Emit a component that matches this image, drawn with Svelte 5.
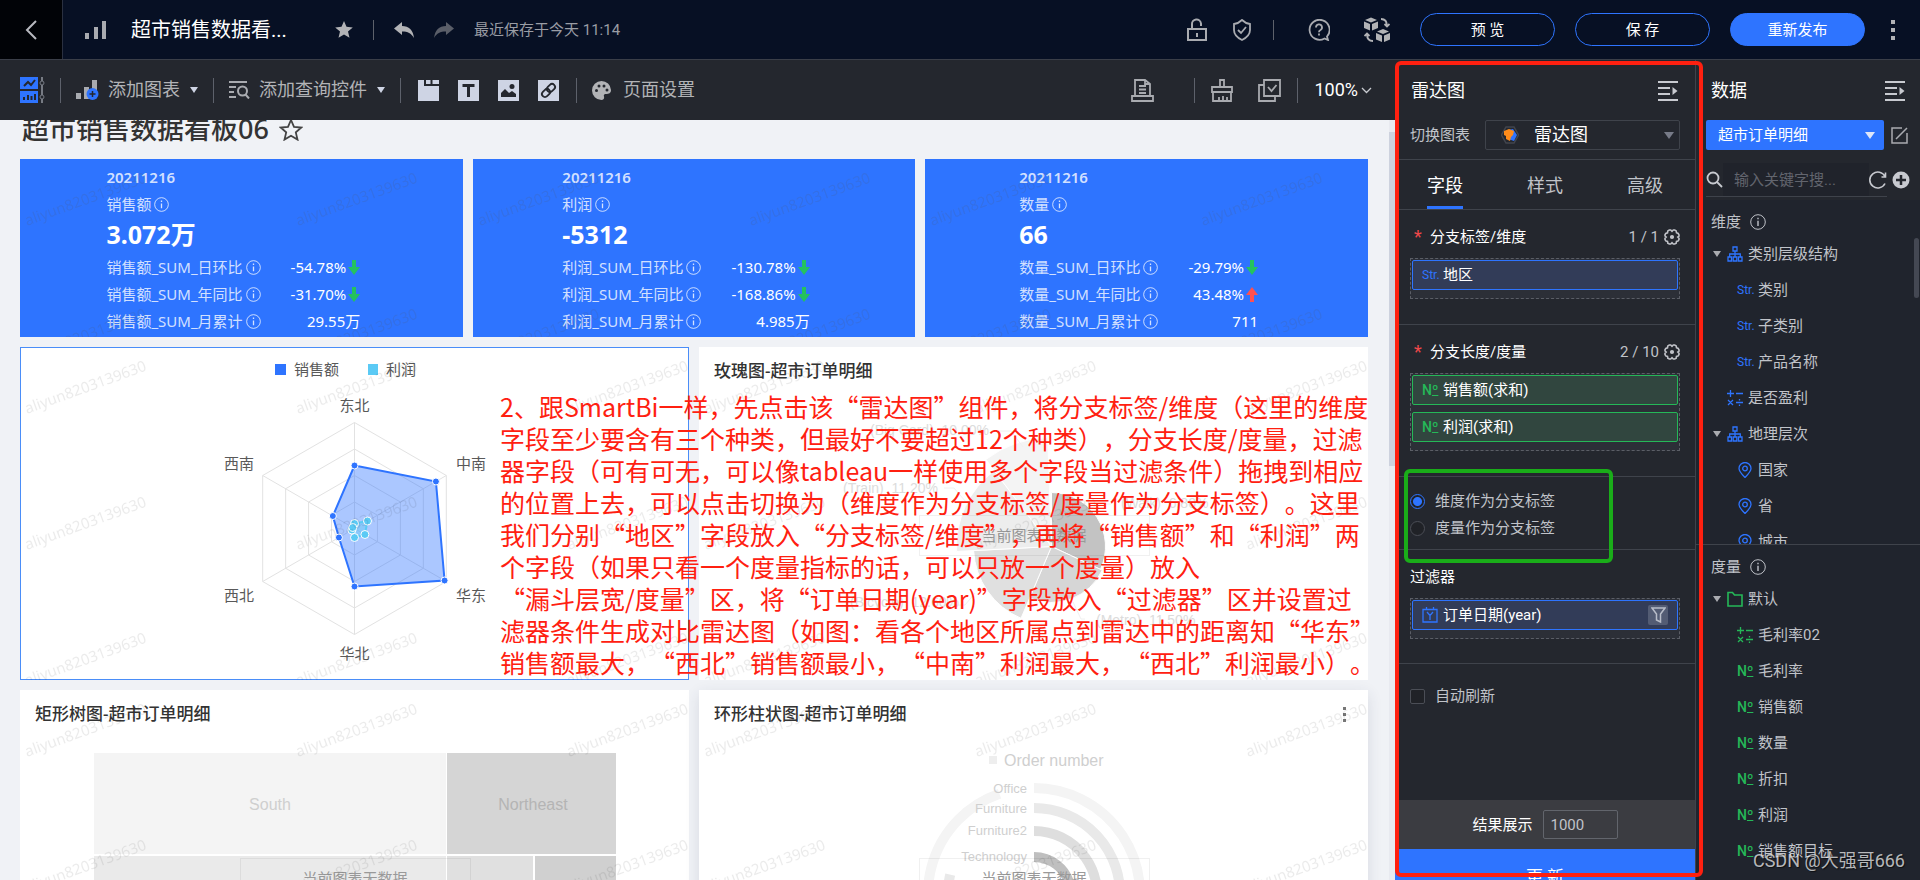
<script>
    let tab = $state("字段");
    let splitBy = $state("dim");
    let autoRefresh = $state(false);
    let limit = $state("1000");
    let keyword = $state("");

    const tabs = ["字段", "样式", "高级"];

    const kpis = [
        {
            name: "销售额", value: "3.072万",
            rows: [
                { label: "销售额_SUM_日环比", value: "-54.78%", trend: "down" },
                { label: "销售额_SUM_年同比", value: "-31.70%", trend: "down" },
                { label: "销售额_SUM_月累计", value: "29.55万" }
            ]
        },
        {
            name: "利润", value: "-5312",
            rows: [
                { label: "利润_SUM_日环比", value: "-130.78%", trend: "down" },
                { label: "利润_SUM_年同比", value: "-168.86%", trend: "down" },
                { label: "利润_SUM_月累计", value: "4.985万" }
            ]
        },
        {
            name: "数量", value: "66",
            rows: [
                { label: "数量_SUM_日环比", value: "-29.79%", trend: "down" },
                { label: "数量_SUM_年同比", value: "43.48%", trend: "up" },
                { label: "数量_SUM_月累计", value: "711" }
            ]
        }
    ];

    const dimensions = [
        { icon: "tree", text: "类别层级结构", open: true },
        { icon: "str", text: "类别", sub: true },
        { icon: "str", text: "子类别", sub: true },
        { icon: "str", text: "产品名称", sub: true },
        { icon: "calc", text: "是否盈利" },
        { icon: "tree", text: "地理层次", open: true },
        { icon: "pin", text: "国家", sub: true },
        { icon: "pin", text: "省", sub: true },
        { icon: "pin", text: "城市", sub: true }
    ];

    const measures = [
        { icon: "folder", text: "默认", open: true },
        { icon: "calc", text: "毛利率02", sub: true },
        { icon: "no", text: "毛利率", sub: true },
        { icon: "no", text: "销售额", sub: true },
        { icon: "no", text: "数量", sub: true },
        { icon: "no", text: "折扣", sub: true },
        { icon: "no", text: "利润", sub: true },
        { icon: "no", text: "销售额目标", sub: true }
    ];

    const noteLines = [
        "2、跟SmartBi一样，先点击该“雷达图”组件，将分支标签/维度（这里的维度",
        "字段至少要含有三个种类，但最好不要超过12个种类），分支长度/度量，过滤",
        "器字段（可有可无，可以像tableau一样使用多个字段当过滤条件）拖拽到相应",
        "的位置上去，可以点击切换为（维度作为分支标签/度量作为分支标签）。这里",
        "我们分别“地区”字段放入“分支标签/维度”，再将“销售额”和“利润”两",
        "个字段（如果只看一个度量指标的话，可以只放一个度量）放入",
        "“漏斗层宽/度量”区，将“订单日期(year)”字段放入“过滤器”区并设置过",
        "滤器条件生成对比雷达图（如图：看各个地区所属点到雷达中的距离知“华东”",
        "销售额最大，“西北”销售额最小，“中南”利润最大，“西北”利润最小）。"
    ];

    // angle is in degrees, clockwise from the top
    function polar(cx, cy, r, angle) {
        const a = (angle - 90) * Math.PI / 180;
        return [cx + r * Math.cos(a), cy + r * Math.sin(a)];
    }

    const radar = { cx: 334.5, cy: 181.5, r: 106 };
    const axes = [0, 60, 120, 180, 240, 300];
    const ring = (r) => axes.map((a) => polar(radar.cx, radar.cy, r, a).join(",")).join(" ");
    const points = (values) => values.map((v, i) => polar(radar.cx, radar.cy, v, axes[i]));
    const sales = points([63, 94, 104, 58, 18, 25]);
    const profit = points([5, 15, 12, 9, 3, 2]);

    const radarLabels = [
        { text: "东北", x: 334.5, y: 64, anchor: "middle" },
        { text: "中南", x: 436, y: 122, anchor: "start" },
        { text: "华东", x: 436, y: 254, anchor: "start" },
        { text: "华北", x: 334.5, y: 312, anchor: "middle" },
        { text: "西北", x: 234, y: 254, anchor: "end" },
        { text: "西南", x: 234, y: 122, anchor: "end" }
    ];

    function sector(cx, cy, r, from, to) {
        const [x0, y0] = polar(cx, cy, r, from);
        const [x1, y1] = polar(cx, cy, r, to);
        return `M${cx} ${cy}L${x0} ${y0}A${r} ${r} 0 0 1 ${x1} ${y1}Z`;
    }

    const rose = [
        { r: 54, from: 0, to: 115, fill: "#c3c3c3" },
        { r: 56, from: 115, to: 203, fill: "#d6d6d6" },
        { r: 78, from: 203, to: 267, fill: "#e0e0e0" },
        { r: 95, from: 267, to: 323, fill: "#ededed" },
        { r: 109, from: 323, to: 358, fill: "#f4f4f4" }
    ];

    const roseLabels = [
        { text: "(Big Card)  10.00%", x: 171, y: 88 },
        { text: "(Train)  11.20%", x: 144, y: 146 },
        { text: "(Bicycle)  12.60%", x: 151, y: 260 },
        { text: "(Walk)  6.80%", x: 422, y: 161 },
        { text: "(Metro)  11.50%", x: 397, y: 278 }
    ];

    function arc(r, to) {
        const [x, y] = polar(335, 204, r, to);
        return `M335 ${204 - r}A${r} ${r} 0 ${to > 180 ? 1 : 0} 1 ${x} ${y}`;
    }

    const rings = [
        { text: "Office", r: 106, to: 341, stroke: "#f4f4f4", y: 103 },
        { text: "Furniture", r: 86, to: 283, stroke: "#e9e9e9", y: 123 },
        { text: "Furniture2", r: 63, to: 220, stroke: "#dedede", y: 145 },
        { text: "Technology", r: 37, to: 150, stroke: "#bfbfbf", y: 171 }
    ];
</script>

{#snippet watermark(id, dark)}
    <svg class="watermark" class:dark aria-hidden="true">
        <defs>
            <pattern {id} width="271" height="136" patternUnits="userSpaceOnUse">
                <text transform="translate(7 67) rotate(-20)">aliyun8203139630</text>
            </pattern>
        </defs>
        <rect width="100%" height="100%" fill="url(#{id})" />
    </svg>
{/snippet}

{#snippet info(size)}
    <svg width={size} height={size} viewBox="0 0 16 16" fill="none" stroke="currentColor">
        <circle cx="8" cy="8" r="7.3" />
        <path d="M8 6.800v5.200M8 3.800v1.500" stroke-width="1.400" />
    </svg>
{/snippet}

{#snippet collapse()}
    <svg width="20" height="20" viewBox="0 0 20 20" stroke="#c8cad0" stroke-width="2" fill="none">
        <path d="M0 1h20M0 7h12M0 13h12M0 19h20" />
        <path d="M14.5 6v8l5-4z" fill="#c8cad0" stroke="none" />
    </svg>
{/snippet}

{#snippet gear()}
    <svg width="16" height="16" viewBox="0 0 16 16" fill="none" stroke="#c0c2c8" stroke-width="1.600">
        <path d="M5.300 1h1.400l1.300 1.300L9.300 1h1.400l1.500.900.300 1.900 1.700.700.800 1.400v1.200L13.800 8l1.200 1.300v1.200l-.800 1.400-1.700.500-.300 1.800-1.500.800H9.300L8 13.700 6.700 15H5.300l-1.500-.800-.300-1.800-1.700-.500L1 10.500V9.300L2.200 8 1 7V5.800l.800-1.400 1.700-.600.300-1.900z" />
        <circle cx="8" cy="8" r="1.300" fill="#c0c2c8" />
    </svg>
{/snippet}

{#snippet fieldIcon(kind)}
    {#if kind === "str"}
        <span class="ft str">Str.</span>
    {:else if kind === "no"}
        <span class="ft no">N<u>º</u></span>
    {:else}
        <svg class="ft" width="16" height="16" viewBox="0 0 16 16" fill="none" stroke="currentColor" stroke-width="1.300">
            {#if kind === "tree"}
                <path d="M6 1h4v4H6zM1 11h3.500v4H1zM6.200 11h3.600v4H6.200zM11.500 11H15v4h-3.500zM8 5v6M2.700 11V8h10.600v3" />
            {:else if kind === "calc"}
                <path d="M0 3.500h7M3.500 0v7M9 3.500h7M1 10l5 5M6 10l-5 5M9 12.500h7M12.500 9v1.500M12.500 14.500V16" />
            {:else if kind === "pin"}
                <path d="M8 15.500C4.500 12 2 9.500 2 6.500a6 6 0 0 1 12 0c0 3-2.500 5.500-6 9z" />
                <circle cx="8" cy="6.500" r="2.300" />
            {:else if kind === "folder"}
                <path d="M1 1.500h4.500l2 2.500H15v11H1z" stroke-width="1.600" />
            {:else if kind === "date"}
                <path d="M1 2.500h14v12.500H1zM4.500 0v3M11.500 0v3M5 5l3 3.500L11 5M8 8.500V13" />
            {/if}
        </svg>
    {/if}
{/snippet}

{#snippet tree(items)}
    <ul>
        {#each items as item}
            <li class:sub={item.sub}>
                <span class="arrow">{#if item.open}<i class="caret"></i>{/if}</span>
                {@render fieldIcon(item.icon)}
                <span>{item.text}</span>
            </li>
        {/each}
    </ul>
{/snippet}

<div class="app">
    <header>
        <button class="back" aria-label="返回">
            <svg width="12" height="20" viewBox="0 0 12 20" fill="none" stroke="#b8bac0" stroke-width="2"><path d="M11 1L2 10l9 9" /></svg>
        </button>
        <svg class="bars" width="22" height="18" viewBox="0 0 22 18" fill="#a9abb0">
            <path d="M0 12h4v6H0zM9 6h4v12H9z" /><path d="M17 0h4v18h-4z" />
        </svg>
        <span class="doc">超市销售数据看...</span>
        <svg class="fav" width="18" height="17" viewBox="0 0 18 17" fill="#b2b3b6"><path d="M9 0l2.500 5.800 6.300.600-4.800 4.200 1.500 6.200L9 13.500l-5.500 3.300L5 10.600.200 6.400l6.300-.600z" /></svg>
        <i class="bar"></i>
        <svg class="undo" width="20" height="16" viewBox="0 0 20 16" fill="#b2b3b6"><path d="M8 0v4c7 0 11 4 12 12-3-5-6-6.500-12-6.500V13L0 6.500z" /></svg>
        <svg class="redo" width="20" height="16" viewBox="0 0 20 16" fill="#5a5e68"><path d="M12 0v4C5 4 1 8 0 16c3-5 6-6.500 12-6.500V13l8-6.500z" /></svg>
        <span class="saved">最近保存于今天 11:14</span>
        <div class="actions">
            <svg width="20" height="24" viewBox="0 0 20 24" fill="none" stroke="#a9abb0" stroke-width="2"><path d="M1 11h18v11H1zM5 11V6.500a4.500 4.500 0 0 1 9-1V8M10 15v4" /></svg>
            <svg width="18" height="22" viewBox="0 0 18 22" fill="none" stroke="#a9abb0" stroke-width="1.800"><path d="M9 1c2.500 2.500 4.500 3.500 8 4v6c0 5-4 8-8 10-4-2-8-5-8-10V5c3.500-.500 5.500-1.500 8-4z" /><path d="M5 11l3 3 5-6" /></svg>
            <i class="bar"></i>
            <svg class="help" width="22" height="22" viewBox="0 0 22 22" fill="none" stroke="#a9abb0" stroke-width="1.800"><path d="M19 17.500A10 10 0 1 0 16.500 19.500L20 21z" /><path d="M8 8.500a3 3 0 1 1 4.200 2.700c-.900.400-1.200.900-1.200 2M11 14.500v2" /></svg>
            <svg width="26" height="26" viewBox="0 0 26 26" fill="#b2b3b6"><path d="M1 3l6-2.500L13 3 7 5.500zM0 4.500l6 2.500v6.500L0 11zM14 4.500L8 7v6.500l6-2.500zM13 14.500l6-2.500 6 2.500-6 2.500zM12 16l6 2.500V25l-6-2.500zM26 16l-6 2.500V25l6-2.500z" /><path d="M17 2c4 0 6 2 6 7M20.500 7l2.500 2.500L25.500 7M9 24c-4 0-6-2-6-7M.500 19L3 16.500 5.500 19" fill="none" stroke="#b2b3b6" stroke-width="1.800" /></svg>
            <div class="btns">
                <button class="pill">预 览</button>
                <button class="pill">保 存</button>
                <button class="pill solid">重新发布</button>
            </div>
            <svg width="5" height="20" viewBox="0 0 5 20" fill="#b2b3b6"><path d="M0 0h4v4H0zM0 8h4v4H0zM0 16h4v4H0z" /></svg>
        </div>
    </header>

    <main>
        <div class="toolbar">
            <svg width="25" height="26" viewBox="0 0 25 26"><path d="M0 0h18v12H0zM0 14h18v12H0z" fill="#2e74ff" /><path d="M4 9l4-4 3 3 4-5M4 23v-3M8 23v-5M11.500 23v-4M15 23v-6" fill="none" stroke="#24272e" stroke-width="2" /><path d="M22 0v4M22 8v10M22 22v4" stroke="#777b84" stroke-width="2" /><circle cx="22" cy="6" r="2" fill="none" stroke="#777b84" /><circle cx="22" cy="20" r="2" fill="none" stroke="#777b84" /></svg>
            <i class="bar"></i>
            <button class="tool">
                <svg width="23" height="20" viewBox="0 0 23 20" fill="#a9abb0"><path d="M0 13h5v6H0zM8 7h5v12H8zM16 0h5v13h-5z" /><circle cx="16.500" cy="14" r="6" fill="#2e74ff" /><path d="M13.500 14h6M16.500 11v6" stroke="#24272e" stroke-width="1.500" /></svg>
                添加图表 <i class="caret light"></i>
            </button>
            <i class="bar"></i>
            <button class="tool">
                <svg width="21" height="18" viewBox="0 0 21 18" fill="none" stroke="#a9abb0" stroke-width="2"><path d="M0 1h18M0 6h7M0 11h5M0 16h7M16.500 13.500l3.500 4" /><circle cx="13.500" cy="10" r="4.500" /></svg>
                添加查询控件 <i class="caret light"></i>
            </button>
            <i class="bar"></i>
            <div class="blocks">
                <button aria-label="选项卡"><svg width="21" height="21" viewBox="0 0 21 21"><path d="M0 0h21v21H0z" fill="#ced4e4" /><path d="M7 0v5h14M13.500 0v5" fill="none" stroke="#24272e" stroke-width="2" /></svg></button>
                <button aria-label="文本"><svg width="21" height="21" viewBox="0 0 21 21"><path d="M0 0h21v21H0z" fill="#ced4e4" /><path d="M4.500 5.500h12M10.500 5v12" fill="none" stroke="#24272e" stroke-width="3" /></svg></button>
                <button aria-label="图片"><svg width="21" height="21" viewBox="0 0 21 21"><path d="M0 0h21v21H0z" fill="#ced4e4" /><path d="M3 17v-4l4-4 4 4 3-2 4 3v3z" fill="#24272e" /><circle cx="14" cy="6.500" r="2.500" fill="#24272e" /></svg></button>
                <button aria-label="链接"><svg width="21" height="21" viewBox="0 0 21 21"><path d="M0 0h21v21H0z" fill="#ced4e4" /><g fill="none" stroke="#24272e" stroke-width="1.800" transform="rotate(-45 10.500 10.500)"><rect x="2.500" y="7.500" width="9" height="6" rx="3" /><rect x="9.500" y="7.500" width="9" height="6" rx="3" /></g></svg></button>
            </div>
            <i class="bar"></i>
            <button class="tool page">
                <svg width="19" height="19" viewBox="0 0 19 19"><path d="M9.500 0a9.500 9.500 0 0 1 9.500 9c0 3-2 4-5 4-2 0-2.500 1-2 2.500.500 2-.500 3.500-2.500 3.500a9.500 9.500 0 0 1 0-19z" fill="#b2b3b6" /><g fill="#24272e"><circle cx="4.500" cy="9.500" r="1.500" /><circle cx="7" cy="5" r="1.500" /><circle cx="12" cy="5" r="1.500" /><circle cx="15" cy="9" r="1.500" /></g></svg>
                页面设置
            </button>
            <div class="right">
                <svg class="print" width="23" height="23" viewBox="0 0 23 23" fill="none" stroke="#a9abb0" stroke-width="1.800"><path d="M4 17V1h10l5 4v12M1 17h21v5H1zM8 7h7M8 10.500h7M8 14h7M14 1v4h5" /></svg>
                <i class="bar"></i>
                <svg width="22" height="23" viewBox="0 0 22 23" fill="none" stroke="#a9abb0" stroke-width="1.800"><path d="M9 8V1h4v7M1 8h20v5H1zM2 13v9h18v-9M8 22v-4M12 22v-5M16 22v-4" /></svg>
                <svg width="23" height="23" viewBox="0 0 23 23" fill="none" stroke="#a9abb0" stroke-width="1.800"><path d="M6 1h16v16H6zM6 6H1v16h16v-5M10 8l3.500 4 5-6" /></svg>
                <i class="bar"></i>
                <button class="zoom">100%<svg width="11" height="7" viewBox="0 0 11 7" fill="none" stroke="#c8cad0" stroke-width="1.300"><path d="M1 1l4.500 4.500L10 1" /></svg></button>
            </div>
        </div>

        <div class="canvas">
            <h1>超市销售数据看板06
                <svg width="24" height="23" viewBox="0 0 24 23" fill="none" stroke="#444" stroke-width="1.800"><path d="M12 2l3 6.800 7.300.700-5.500 4.900 1.700 7.200L12 17.800l-6.500 3.800 1.700-7.200L1.700 9.500 9 8.800z" /></svg>
            </h1>
            <div class="row three">
                {#each kpis as kpi, i}
                    <section class="kpi">
                        <div class="kpi-body">
                            <div class="date">20211216</div>
                            <div class="name">{kpi.name}{@render info(15)}</div>
                            <div class="value">{kpi.value}</div>
                            <div class="rows">
                                {#each kpi.rows as row}
                                    <div class="name">{row.label}{@render info(15)}</div>
                                    <div class="num">{row.value}{#if row.trend}<svg class={row.trend} width="12" height="15" viewBox="0 0 12 15"><path d="M4 0h4v7h4l-6 8-6-8h4z" /></svg>{/if}</div>
                                {/each}
                            </div>
                        </div>
                        {@render watermark("wm-kpi" + i, true)}
                    </section>
                {/each}
            </div>

            <div class="row two">
                <section class="card selected">
                    <svg class="chart over" viewBox="0 0 669 333">
                        <rect x="255" y="17" width="11" height="11" fill="#2e74ff" />
                        <text x="274" y="28" class="label">销售额</text>
                        <rect x="348" y="17" width="10" height="11" fill="#5bcaf5" />
                        <text x="366" y="28" class="label">利润</text>
                        <g fill="none" stroke="#e2e2e2">
                            {#each [26.5, 53, 79.5, 106] as r}
                                <polygon points={ring(r)} />
                            {/each}
                            {#each points([106, 106, 106, 106, 106, 106]) as p}
                                <line x1={radar.cx} y1={radar.cy} x2={p[0]} y2={p[1]} />
                            {/each}
                        </g>
                        <polygon points={sales.join(" ")} fill="#2e74ff" fill-opacity=".4" stroke="#2e74ff" stroke-width="2" />
                        <polygon points={profit.join(" ")} fill="#5bcaf5" fill-opacity=".4" stroke="#5bcaf5" stroke-width="2" />
                        {#each sales as p}
                            <circle cx={p[0]} cy={p[1]} r="3.500" fill="#2e74ff" stroke="#fff" />
                        {/each}
                        {#each profit as p}
                            <circle cx={p[0]} cy={p[1]} r="4" fill="#5bcaf5" stroke="#fff" />
                        {/each}
                        {#each radarLabels as l}
                            <text x={l.x} y={l.y} text-anchor={l.anchor} class="label">{l.text}</text>
                        {/each}
                    </svg>
                    {@render watermark("wm-radar")}
                </section>

                <section class="card">
                    <h2>玫瑰图-超市订单明细</h2>
                    <svg class="chart over" viewBox="0 0 669 333">
                        {#each rose as s}
                            <path d={sector(352.5, 199.5, s.r, s.from, s.to)} fill={s.fill} stroke="#fff" />
                        {/each}
                        <path d="M292 84h20l12 16M245 141h10l12 14M246 258h20l10-12M412 157h-10l-8 10M386 272h-4l-8-17" fill="none" stroke="#f0f0f0" />
                        {#each roseLabels as l}
                            <text x={l.x} y={l.y} class="ghost s14">{l.text}</text>
                        {/each}
                    </svg>
                    <div class="empty">当前图表无数据</div>
                    {@render watermark("wm-rose")}
                </section>
            </div>

            <div class="row two">
                <section class="card">
                    <h2>矩形树图-超市订单明细</h2>
                    <svg class="chart over" viewBox="0 0 669 333">
                        <path d="M74 63h352v101H74z" fill="#f4f4f4" />
                        <path d="M427 63h169v101H427z" fill="#d5d5d5" />
                        <path d="M74 166h352v120H74z" fill="#eaeaea" />
                        <path d="M427 166h86v120h-86z" fill="#e0e0e0" />
                        <path d="M515 166h81v120h-81z" fill="#d0d0d0" />
                        <text x="250" y="120" text-anchor="middle" class="ghost s16">South</text>
                        <text x="513" y="120" text-anchor="middle" class="ghost s16 deep">Northeast</text>
                    </svg>
                    <div class="empty">当前图表无数据</div>
                    {@render watermark("wm-tree")}
                </section>

                <section class="card raised">
                    <h2>环形柱状图-超市订单明细</h2>
                    <svg class="more" width="3" height="15" viewBox="0 0 3 15" fill="#777"><path d="M0 0h3v3H0zM0 6h3v3H0zM0 12h3v3H0z" /></svg>
                    <svg class="chart over" viewBox="0 0 669 333">
                        <rect x="290" y="66" width="8" height="8" fill="#eee" />
                        <text x="305" y="76" class="ghost s16">Order number</text>
                        {#each rings as r}
                            <path d={arc(r.r, r.to)} fill="none" stroke={r.stroke} stroke-width="10" />
                            <text x="328" y={r.y} text-anchor="end" class="ghost s13">{r.text}</text>
                        {/each}
                    </svg>
                    <div class="empty">当前图表无数据</div>
                    {@render watermark("wm-ring")}
                </section>
            </div>
            <div class="scroll"></div>
            <div class="note">
                {#each noteLines as line}
                    <div>{line}</div>
                {/each}
            </div>
        </div>
    </main>

    <aside class="config">
        <div class="head">雷达图 {@render collapse()}</div>
        <div class="switch">
            <label for="chart">切换图表</label>
            <div class="pick">
                <select id="chart"><option>雷达图</option></select>
                <svg class="hex" width="18" height="18" viewBox="0 0 18 18"><path d="M5 1h8l4.500 8-4.500 8H5L.500 9z" fill="none" stroke="#42454d" stroke-width="1.500" /><path d="M7 4l5-1 4 6-3 6-6-2z" fill="#2e74ff" /><path d="M3 5l5-2 5 2-1 4-2 2-1 4-4-2 0-3-2-1z" fill="#ff8c1a" /></svg>
                <i class="caret big"></i>
            </div>
        </div>
        <nav>
            {#each tabs as t}
                <button class:active={t === tab} onclick={() => (tab = t)}>{t}</button>
            {/each}
        </nav>
        <div class="section">
            <div class="title"><b>*</b>分支标签/维度<span>1 / 1</span>{@render gear()}</div>
            <div class="zone">
                <div class="chip">{@render fieldIcon("str")}地区</div>
            </div>
        </div>
        <div class="section">
            <div class="title"><b>*</b>分支长度/度量<span>2 / 10</span>{@render gear()}</div>
            <div class="zone">
                <div class="chip green">{@render fieldIcon("no")}销售额(求和)</div>
                <div class="chip green">{@render fieldIcon("no")}利润(求和)</div>
            </div>
        </div>
        <div class="section radios">
            <label><input type="radio" name="split" value="dim" bind:group={splitBy} />维度作为分支标签</label>
            <label><input type="radio" name="split" value="mea" bind:group={splitBy} />度量作为分支标签</label>
            <div class="mark green-mark"></div>
        </div>
        <div class="section filter">
            <div class="title">过滤器</div>
            <div class="zone">
                <div class="chip">
                    {@render fieldIcon("date")}订单日期(year)
                    <button class="funnel" aria-label="筛选"><svg width="15" height="16" viewBox="0 0 15 16" fill="none" stroke="#b8bdc9" stroke-width="1.500"><path d="M1 1h13L9.500 7v8l-4-2V7z" /></svg></button>
                </div>
            </div>
        </div>
        <label class="auto"><input type="checkbox" bind:checked={autoRefresh} />自动刷新</label>
        <div class="result">
            <label for="limit">结果展示</label>
            <input id="limit" type="text" bind:value={limit} />
        </div>
        <button class="update">更 新</button>
        <div class="mark red-mark"></div>
    </aside>

    <aside class="data">
        <div class="head">数据 {@render collapse()}</div>
        <div class="source">
            <div class="pick">
                <select aria-label="数据集"><option>超市订单明细</option></select>
                <i class="caret big"></i>
            </div>
            <svg width="17" height="17" viewBox="0 0 17 17" fill="none" stroke="#a9abb0" stroke-width="1.500"><path d="M11 1H1v15h15V6M5 12L16 1" /></svg>
        </div>
        <div class="search">
            <div class="box">
                <svg width="17" height="17" viewBox="0 0 17 17" fill="none" stroke="#c8cad0" stroke-width="1.800"><circle cx="7" cy="7" r="5.500" /><path d="M11 11l5 5" /></svg>
                <input type="text" aria-label="搜索" placeholder="输入关键字搜..." bind:value={keyword} />
                <svg width="18" height="18" viewBox="0 0 18 18" fill="none" stroke="#c8cad0" stroke-width="1.600"><path d="M16 12.500A8 8 0 1 1 16 5.500M16.500 1.500v4.500h-4" /></svg>
            </div>
            <svg width="18" height="18" viewBox="0 0 18 18"><circle cx="9" cy="9" r="8.500" fill="#c8cad0" /><path d="M9 4v10M4 9h10" stroke="#24272e" stroke-width="2.500" /></svg>
        </div>
        <div class="dims">
            <div class="group">维度 {@render info(16)}</div>
            {@render tree(dimensions)}
            <div class="thumb"></div>
        </div>
        <div class="meas">
            <div class="group">度量 {@render info(16)}</div>
            {@render tree(measures)}
        </div>
        <div class="credit">CSDN @大强哥666</div>
    </aside>
</div>

<style>
    :global(body) {
        overflow: hidden;
    }

    .app {
        display: grid;
        grid-template: 60px minmax(0, 1fr) / minmax(0, 1fr) 301px 224px;
        height: 100vh;
        background: #24272e;
        color: #c0c3c9;
        font: 15px/20px Roboto, "Noto Sans CJK SC", sans-serif;
    }

    .app * {
        box-sizing: border-box;
    }

    button, input, select {
        font: inherit;
        color: inherit;
        border: 0;
        background: none;
        margin: 0;
        padding: 0;
    }

    button {
        cursor: pointer;
    }

    svg {
        flex: none;
    }

    .bar {
        width: 1px;
        height: 20px;
        background: #5d616b;
        flex: none;
    }

    .caret {
        border: 4px solid transparent;
        border-top: 6px solid #a9abb0;
        border-bottom: 0;
        flex: none;
    }

    .caret.light {
        border-top-color: #ced4e4;
        margin-left: 1px;
    }

    /* header */
    header {
        grid-column: 1 / -1;
        display: flex;
        align-items: center;
        background: #071024;
        border-bottom: 1px solid #3a3e48;
    }

    .back {
        width: 63px;
        height: 100%;
        background: #010307;
        border-right: 1px solid #2a3040;
        line-height: 0;
    }

    .bars {
        margin-left: 22px;
    }

    .doc {
        margin-left: 24px;
        width: 204px;
        font-size: 20px;
        color: #fff;
    }

    header .bar {
        margin: 0 20px;
    }

    .undo {
        margin-right: 20px;
    }

    .saved {
        margin-left: 20px;
        color: #9a9da5;
    }

    .actions {
        margin-left: auto;
        margin-right: 24px;
        display: flex;
        align-items: center;
        gap: 26px;
    }

    .actions .bar {
        margin: 0 0 0 -4px;
    }

    .help {
        margin: 0 8px;
    }

    .btns {
        display: flex;
        gap: 20px;
        margin-left: 4px;
    }

    .pill {
        width: 135px;
        height: 33px;
        border: 1px solid #2e74ff;
        border-radius: 17px;
        color: #fff;
    }

    .pill.solid {
        background: #2e74ff;
    }

    /* toolbar */
    main {
        display: flex;
        flex-direction: column;
        min-width: 0;
    }

    .toolbar {
        display: flex;
        align-items: center;
        gap: 15px;
        height: 60px;
        padding: 0 23px 0 20px;
        flex: none;
    }

    .toolbar .bar {
        height: 25px;
    }

    .tool {
        display: flex;
        align-items: center;
        gap: 9px;
        font-size: 18px;
        color: #b2b3b6;
    }

    .tool.page {
        gap: 12px;
    }

    .blocks {
        display: flex;
        gap: 19px;
        margin: 0 2px;
    }

    .blocks button {
        line-height: 0;
    }

    .right {
        margin-left: auto;
        display: flex;
        align-items: center;
        gap: 16px;
    }

    .print {
        margin-right: 24px;
    }

    .right svg + svg {
        margin-left: 9px;
    }

    .zoom {
        display: flex;
        align-items: center;
        gap: 3px;
        font-size: 18px;
        color: #fff;
    }

    /* dashboard */
    .canvas {
        position: relative;
        flex: 1;
        min-height: 0;
        overflow: hidden;
        background: #f0f2f6;
        padding: 0 27px 0 20px;
        font-family: "Noto Sans", "Noto Sans CJK SC", sans-serif;
    }

    h1 {
        display: flex;
        gap: 10px;
        align-items: center;
        height: 50px;
        margin: -11px 0 0;
        padding: 0 2px 10px;
        font-size: 27px;
        font-weight: 500;
        color: #333;
    }

    .row {
        display: grid;
        gap: 10px;
        margin-bottom: 10px;
    }

    .three {
        grid-template-columns: repeat(3, minmax(0, 1fr));
    }

    .two {
        grid-template-columns: repeat(2, minmax(0, 1fr));
    }

    .kpi {
        position: relative;
        display: flex;
        justify-content: center;
        height: 178px;
        padding: 5px 16px 6px 0;
        background: #2e74ff;
        color: #fff;
        line-height: 27px;
    }

    .kpi-body {
        overflow: hidden;
    }

    .date {
        font-weight: 600;
        color: rgba(255, 255, 255, .8);
    }

    .name {
        display: flex;
        align-items: center;
        gap: 3px;
        color: rgba(255, 255, 255, .8);
    }

    .value {
        font-size: 25px;
        font-weight: 700;
        line-height: 32px;
        margin-bottom: 4px;
    }

    .rows {
        display: grid;
        grid-template-columns: auto auto;
        column-gap: 30px;
    }

    .num {
        display: flex;
        align-items: center;
        justify-content: flex-end;
        gap: 2px;
    }

    .down {
        fill: #25c25f;
    }

    .up {
        fill: #ff5050;
        transform: rotate(180deg);
    }

    .card {
        position: relative;
        height: 333px;
        background: #fff;
    }

    .selected {
        outline: 1px solid #4a8df8;
        outline-offset: -1px;
    }

    .raised {
        box-shadow: 0 4px 14px rgba(40, 50, 80, .12);
    }

    h2 {
        margin: 0;
        padding: 12px 15px;
        font-size: 17px;
        line-height: 24px;
        font-weight: 500;
        color: #333;
    }

    .chart {
        display: block;
        width: 100%;
        height: 333px;
    }

    .over {
        position: absolute;
        top: 0;
        left: 0;
    }

    .label {
        font-size: 15px;
        fill: #595959;
    }

    .ghost {
        font-family: "Liberation Sans", Arial, sans-serif;
        fill: #cfcfcf;
        white-space: pre;
    }

    .deep {
        fill: #b4b4b4;
    }

    .s13 {
        font-size: 13px;
    }

    .s14 {
        font-size: 14px;
        fill: #dcdcdc;
    }

    .s16 {
        font-size: 16px;
    }

    .empty {
        position: absolute;
        top: 168px;
        left: 50%;
        width: 231px;
        margin-left: -115px;
        height: 41px;
        line-height: 39px;
        border: 1px solid rgba(0, 0, 0, .06);
        text-align: center;
        color: #999;
    }

    .more {
        position: absolute;
        top: 17px;
        right: 22px;
    }

    .watermark {
        position: absolute;
        inset: 0;
        width: 100%;
        height: 100%;
        pointer-events: none;
        font-size: 15px;
        fill: rgba(0, 0, 0, .08);
    }

    .watermark.dark {
        fill: rgba(80, 80, 80, .14);
    }

    .scroll {
        position: absolute;
        top: 0;
        right: 0;
        bottom: 0;
        width: 6px;
        background: linear-gradient(#cdd2de, #cdd2de) 0 12px / 6px 334px no-repeat #e8eaf0;
    }

    .note {
        position: absolute;
        top: 270px;
        left: 500px;
        font-family: "Noto Sans CJK SC", sans-serif;
        font-size: 25px;
        line-height: 32px;
        font-weight: 400;
        color: #ff2010;
        white-space: nowrap;
        text-spacing-trim: space-all;
    }

    /* chart settings */
    .config {
        position: relative;
        z-index: 1;
        display: flex;
        flex-direction: column;
        min-height: 0;
        border-right: 1px solid #3f434b;
    }

    .head {
        display: flex;
        align-items: center;
        justify-content: space-between;
        height: 60px;
        padding: 2px 17px 0 16px;
        font-size: 18px;
        color: #fff;
        flex: none;
    }

    .switch {
        display: flex;
        align-items: center;
        gap: 15px;
        padding: 0 15px 9px;
        border-bottom: 1px solid #3f434b;
    }

    .pick {
        position: relative;
        flex: 1;
    }

    .pick select {
        appearance: none;
        width: 100%;
        height: 30px;
        padding: 0 30px 0 48px;
        border: 1px solid #3f434b;
        border-radius: 2px;
        font-size: 18px;
        color: #fff;
    }

    .hex {
        position: absolute;
        left: 16px;
        top: 6px;
    }

    .big {
        position: absolute;
        right: 6px;
        top: 12px;
        border-width: 7px 5px 0;
        border-top-color: #777b88;
    }

    nav {
        display: flex;
        justify-content: space-between;
        height: 50px;
        padding: 0 32px;
        border-bottom: 1px solid #3f434b;
        flex: none;
    }

    nav button {
        padding: 6px 0 0;
        font-size: 18px;
        border-bottom: 3px solid transparent;
    }

    nav .active {
        color: #fff;
        border-color: #2e74ff;
    }

    .section {
        position: relative;
        padding: 17px 15px 25px;
        border-bottom: 1px solid #3f434b;
    }

    .title {
        display: flex;
        align-items: center;
        color: #fff;
        margin-bottom: 11px;
    }

    .title b {
        width: 20px;
        padding-left: 4px;
        font-weight: 400;
        font-size: 18px;
        color: #f0484a;
    }

    .title span {
        margin-left: auto;
        margin-right: 5px;
        color: #c0c3c9;
    }

    .zone {
        display: flex;
        flex-direction: column;
        gap: 7px;
        padding: 1px 1px 8px;
        border: 1px dashed #5b5e66;
        background: #2c2f37;
    }

    .chip {
        display: flex;
        align-items: center;
        gap: 5px;
        height: 30px;
        padding: 0 9px;
        border: 1px solid #2e74ff;
        border-radius: 2px;
        background: #323c58;
        color: #fff;
    }

    .chip.green {
        border-color: #25b858;
        background: #31463f;
    }

    .ft {
        width: 16px;
        white-space: nowrap;
        color: #2e74ff;
        flex: none;
    }

    .str {
        font-size: 12px;
        line-height: 16px;
    }

    .no {
        color: #25b858;
        font-size: 14px;
        font-weight: 500;
    }

    .no u {
        text-underline-offset: 0;
        text-decoration-thickness: 1px;
    }

    .funnel {
        width: 20px;
        height: 20px;
        margin-left: auto;
        border-radius: 2px;
        background: #535c74;
        line-height: 0;
    }

    .radios {
        display: grid;
        gap: 7px;
        padding: 14px 15px 11px;
    }

    .radios label, .auto {
        display: flex;
        align-items: center;
        gap: 10px;
    }

    input[type="radio"], input[type="checkbox"] {
        appearance: none;
        width: 15px;
        height: 15px;
        border: 1px solid #4b4e56;
        background: #202227;
    }

    input[type="radio"] {
        border-radius: 50%;
    }

    input[type="checkbox"] {
        border-radius: 2px;
    }

    input[type="radio"]:checked {
        border-color: #2e74ff;
        background: radial-gradient(circle, #2e74ff 4px, #202227 5px);
    }

    .filter {
        padding-bottom: 24px;
    }

    .auto {
        padding: 22px 15px;
    }

    .result {
        display: flex;
        align-items: center;
        justify-content: center;
        gap: 10px;
        height: 49px;
        margin-top: auto;
        background: #3b3c41;
        color: #fff;
        flex: none;
    }

    .result input {
        width: 75px;
        height: 29px;
        padding: 0 7px;
        border: 1px solid #62656c;
        border-radius: 2px;
        color: #c0c3c9;
    }

    .update {
        height: 31px;
        padding-top: 18px;
        overflow: hidden;
        background: #2e74ff;
        color: #fff;
        font-size: 17px;
        flex: none;
    }

    .mark {
        position: absolute;
        border: 4px solid #ff2010;
        border-radius: 6px;
        pointer-events: none;
    }

    .red-mark {
        inset: 1px -8px 3px 0;
    }

    .green-mark {
        border-color: #1aad19;
        inset: -8px 82px -14px 9px;
        z-index: 1;
    }

    /* data panel */
    .data {
        position: relative;
        display: flex;
        flex-direction: column;
        min-height: 0;
    }

    .data .head {
        padding: 2px 15px 0;
    }

    .source {
        display: flex;
        align-items: center;
        gap: 7px;
        padding: 0 12px 0 10px;
    }

    .source select {
        padding: 0 24px 0 12px;
        border: 0;
        background: #2e74ff;
        font-size: 15px;
    }

    .source .big {
        right: 9px;
        border-top-color: #dfe6f8;
    }

    .search {
        display: flex;
        align-items: center;
        gap: 5px;
        height: 50px;
        padding: 13px 10px 3px;
        flex: none;
    }

    .box {
        display: flex;
        align-items: center;
        flex: 1;
        min-width: 0;
        height: 34px;
        border-bottom: 1px solid #3f434b;
    }

    .box input {
        flex: 1;
        min-width: 0;
        height: 33px;
        padding: 0 11px;
        background: #20232b;
    }

    .box input::placeholder {
        color: #62656e;
    }

    .dims, .meas {
        position: relative;
        background: #20242d;
        overflow: hidden;
    }

    .dims {
        height: 345px;
        border-bottom: 1px solid #3f434b;
        flex: none;
    }

    .meas {
        flex: 1;
        min-height: 0;
    }

    .group {
        display: flex;
        align-items: center;
        gap: 9px;
        height: 36px;
        padding: 8px 15px 0;
    }

    ul {
        list-style: none;
        margin: 0;
        padding: 0 17px;
    }

    li {
        display: flex;
        align-items: center;
        gap: 5px;
        height: 36px;
    }

    .arrow {
        width: 9px;
        display: flex;
    }

    .sub {
        padding-left: 10px;
    }

    .meas .ft {
        color: #25b858;
    }

    .thumb {
        position: absolute;
        top: 38px;
        right: 1px;
        width: 5px;
        height: 60px;
        border-radius: 3px;
        background: #444853;
    }

    .credit {
        position: absolute;
        right: 15px;
        bottom: 7px;
        font-size: 18px;
        line-height: 24px;
        color: rgba(255, 255, 255, .7);
        text-shadow: 1px 1px 1px rgba(0, 0, 0, .6);
    }
</style>
